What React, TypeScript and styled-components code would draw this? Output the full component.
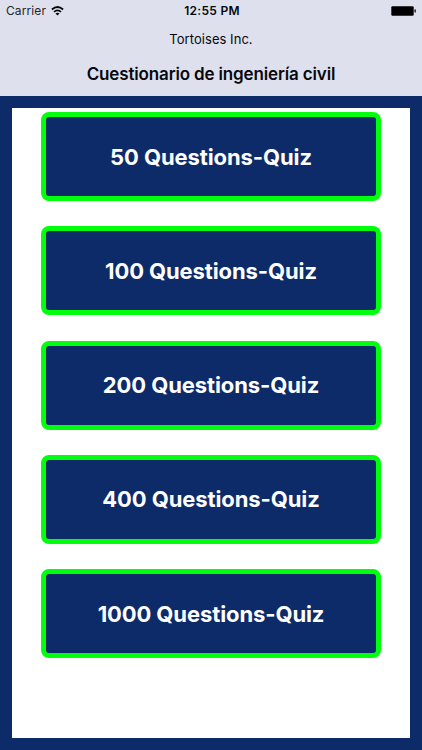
import React from "react";
import styled, { createGlobalStyle } from "styled-components";

const NAVY = "#0d2b68";

const GlobalStyle = createGlobalStyle`
  * { box-sizing: border-box; }
  body { margin: 0; background: ${NAVY}; }
`;

const Screen = styled.div`
  display: flex;
  flex-direction: column;
  width: 422px;
  height: 750px;
  overflow: hidden;
  background: ${NAVY};
  font-family: Inter, "Liberation Sans", sans-serif;
  color: #07080d;
`;

const Header = styled.header`
  height: 96px;
  flex: none;
  background: #dee1ed;
`;

const StatusBar = styled.div`
  display: grid;
  grid-template-columns: 1fr auto 1fr;
  align-items: center;
  height: 22px;
  padding: 0 6px;
`;

const Carrier = styled.div`
  display: flex;
  align-items: center;
  gap: 5px;
  font-size: 12px;
  line-height: 22px;
  letter-spacing: 0.1px;
  color: #23252c;
`;

const Clock = styled.div`
  padding-left: 2px;
  font-size: 12px;
  font-weight: 600;
  line-height: 22px;
  letter-spacing: 0.3px;
`;

const BatteryIcon = styled.svg`
  display: block;
  justify-self: end;
`;

const Company = styled.div`
  height: 34px;
  font-size: 13px;
  line-height: 34px;
  text-align: center;
  letter-spacing: 0.05px;
`;

const Title = styled.h1`
  margin: 0;
  font-size: 17px;
  font-weight: 600;
  line-height: 36px;
  text-align: center;
  letter-spacing: -0.15px;
`;

const Panel = styled.main`
  display: flex;
  flex-direction: column;
  align-items: center;
  gap: 25.25px;
  flex: 1;
  margin: 12px 12px 12px;
  padding-top: 4px;
  background: #fff;
`;

const QuizButton = styled.button`
  flex: none;
  width: 340px;
  height: 89px;
  padding: 0;
  border: 5px solid #00ff0c;
  border-radius: 8px;
  background: ${NAVY};
  color: #fff;
  font-family: inherit;
  font-size: 22px;
  font-weight: 700;
  letter-spacing: -0.1px;
  text-align: center;
`;

const quizzes = [50, 100, 200, 400, 1000];

export default function App() {
  return (
    <Screen>
      <GlobalStyle />
      <Header>
        <StatusBar>
          <Carrier>
            Carrier
            <svg width="13" height="10" viewBox="0 0 13 10" fill="none" stroke="#050609" strokeWidth="1.7">
              <path d="M0.9 3.5Q6.5 -1.5 12.1 3.5" />
              <path d="M3 5.8Q6.5 2.8 10 5.8" />
              <path d="M4.5 7.4Q6.5 5.9 8.5 7.4L6.5 9.5Z" fill="#050609" stroke="none" />
            </svg>
          </Carrier>
          <Clock>12:55 PM</Clock>
          <BatteryIcon width="25" height="10" viewBox="0 0 25 10">
            <rect x="0.3" y="0.2" width="22.4" height="9.6" rx="1.2" fill="#000" />
            <rect x="23.4" y="3.3" width="1.5" height="3.2" rx="0.6" fill="#222" />
          </BatteryIcon>
        </StatusBar>
        <Company>Tortoises Inc.</Company>
        <Title>Cuestionario de ingeniería civil</Title>
      </Header>
      <Panel>
        {quizzes.map((count) => (
          <QuizButton key={count}>{count} Questions-Quiz</QuizButton>
        ))}
      </Panel>
    </Screen>
  );
}
